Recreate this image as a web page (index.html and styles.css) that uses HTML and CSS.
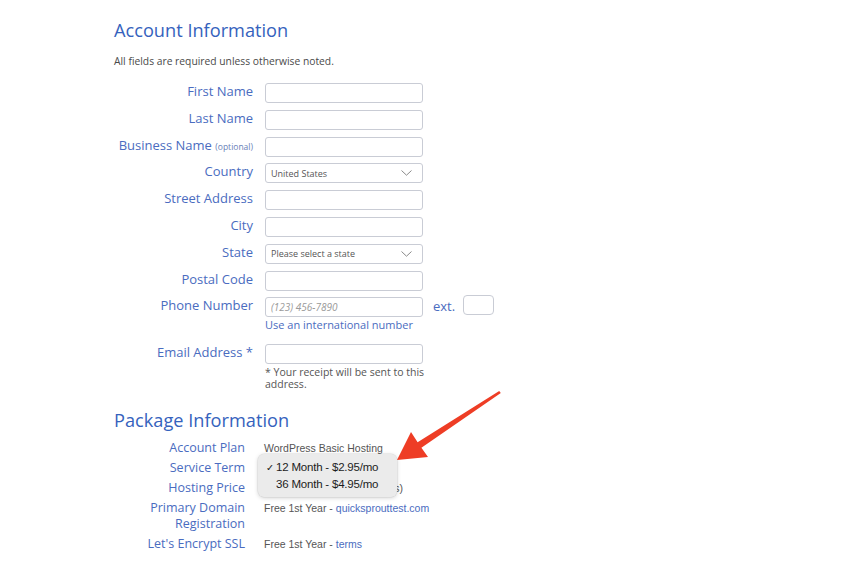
FILE: index.html
```html
<!DOCTYPE html>
<html lang="en">
<head>
<meta charset="utf-8">
<title>Account Information</title>
<link rel="stylesheet" href="styles.css">
</head>
<body>
<div class="page">
  <h2 class="section-title first">Account Information</h2>
  <p class="note">All fields are required unless otherwise noted.</p>

  <div class="form-grid">
    <label class="label">First Name</label>
    <div class="field"><input class="input" type="text"></div>

    <label class="label">Last Name</label>
    <div class="field"><input class="input" type="text"></div>

    <label class="label">Business Name <small class="optional">(optional)</small></label>
    <div class="field"><input class="input" type="text"></div>

    <label class="label">Country</label>
    <div class="field">
      <div class="select"><span>United States</span>
        <svg class="chevron" width="11" height="6" viewBox="0 0 11 6"><path d="M0.5 0.5 L5.5 5.2 L10.5 0.5" fill="none" stroke="#8a8a8a" stroke-width="1"/></svg>
      </div>
    </div>

    <label class="label">Street Address</label>
    <div class="field"><input class="input" type="text"></div>

    <label class="label">City</label>
    <div class="field"><input class="input" type="text"></div>

    <label class="label">State</label>
    <div class="field">
      <div class="select"><span>Please select a state</span>
        <svg class="chevron" width="11" height="6" viewBox="0 0 11 6"><path d="M0.5 0.5 L5.5 5.2 L10.5 0.5" fill="none" stroke="#8a8a8a" stroke-width="1"/></svg>
      </div>
    </div>

    <label class="label">Postal Code</label>
    <div class="field"><input class="input" type="text"></div>

    <label class="label">Phone Number</label>
    <div class="field">
      <div class="phone-line">
        <input class="input" type="text" placeholder="(123) 456-7890">
        <span class="ext">ext.</span>
        <input class="input ext-input" type="text">
      </div>
      <a class="help" href="#">Use an international number</a>
    </div>

    <label class="label">Email Address *</label>
    <div class="field">
      <input class="input" type="text">
      <p class="field-note">* Your receipt will be sent to this address.</p>
    </div>
  </div>

  <h2 class="section-title second">Package Information</h2>
  <div class="package-grid">
    <div class="plabel">Account Plan</div>
    <div class="pvalue">WordPress Basic Hosting</div>

    <div class="plabel">Service Term</div>
    <div class="pvalue term-cell">
      <div class="popup">
        <div class="popup-item"><span class="check">✓</span>12 Month - $2.95/mo</div>
        <div class="popup-item"><span class="check"></span>36 Month - $4.95/mo</div>
      </div>
    </div>

    <div class="plabel">Hosting Price</div>
    <div class="pvalue price">$35.40 (billed over 12 months)</div>

    <div class="plabel">Primary Domain<br>Registration</div>
    <div class="pvalue">Free 1st Year - <a class="link" href="#">quicksprouttest.com</a></div>

    <div class="plabel">Let's Encrypt SSL</div>
    <div class="pvalue">Free 1st Year - <a class="link" href="#">terms</a></div>
  </div>

  <svg class="arrow" width="848" height="561" viewBox="0 0 848 561">
    <polygon points="397,460 411,432 417.6,442.3 499.2,391 500.8,393 421.4,447.7 428,457" fill="#ee3d25"/>
  </svg>
</div>
</body>
</html>
```

FILE: styles.css
```css
html, body {
  margin: 0;
  padding: 0;
  background: #ffffff;
}

.page {
  position: relative;
  width: 848px;
  height: 561px;
  overflow: hidden;
  box-sizing: border-box;
  padding-left: 114px;
  padding-top: 18px;
  font-family: "Open Sans", "Liberation Sans", sans-serif;
}

.section-title {
  margin: 0;
  font-size: 18.2px;
  line-height: 24px;
  font-weight: 400;
  color: #3562bd;
}

.section-title.second {
  margin-top: 18px;
}

.note {
  margin: 12px 0 15px 0;
  font-size: 10.3px;
  line-height: 14px;
  color: #4a4a4a;
}

.form-grid {
  display: grid;
  grid-template-columns: 139px auto;
  column-gap: 12px;
  row-gap: 6.8px;
  align-items: start;
}

.label {
  text-align: right;
  font-size: 13px;
  line-height: 17px;
  color: #4a6cc0;
  white-space: nowrap;
}

.optional {
  font-size: 8.5px;
  color: #6a7fb8;
}

.field {
  display: flex;
  flex-direction: column;
  align-items: flex-start;
}

.input {
  display: block;
  box-sizing: border-box;
  width: 158px;
  height: 20px;
  margin: 0;
  padding: 0 5px;
  border: 1px solid #c9ccd5;
  border-radius: 3px;
  background: #ffffff;
  font-family: "Open Sans", "Liberation Sans", sans-serif;
  font-size: 10px;
  color: #555555;
  outline: none;
}

.input::placeholder {
  color: #9a9a9a;
  font-style: italic;
}

.select {
  box-sizing: border-box;
  width: 158px;
  height: 20px;
  padding: 0 10px 0 5px;
  border: 1px solid #c9ccd5;
  border-radius: 3px;
  display: flex;
  align-items: center;
  justify-content: space-between;
  font-size: 9px;
  color: #555555;
}

.chevron {
  display: block;
}

.phone-line {
  display: flex;
  align-items: flex-start;
}

.ext {
  margin-left: 10px;
  font-size: 13px;
  line-height: 18px;
  color: #4a6cc0;
}

.ext-input {
  width: 31px;
  margin-left: 8px;
  margin-top: -2px;
  border-radius: 4px;
}

.help {
  display: block;
  margin: 1px 0 5px 0;
  font-size: 11px;
  line-height: 14px;
  color: #4a6cc0;
  text-decoration: none;
}

.field-note {
  width: 160px;
  margin: 2px 0 0 0;
  font-size: 10.5px;
  line-height: 12px;
  color: #555555;
}

.package-grid {
  display: grid;
  grid-template-columns: 131px auto;
  column-gap: 19px;
  row-gap: 4px;
  align-items: baseline;
  margin-top: 8px;
}

.plabel {
  text-align: right;
  font-size: 12.5px;
  line-height: 16px;
  color: #4a6cc0;
}

.pvalue {
  font-family: "Liberation Sans", Arial, sans-serif;
  font-size: 10.5px;
  line-height: 16px;
  color: #555555;
}

.price {
  letter-spacing: -0.1px;
}

.term-cell {
  position: relative;
  align-self: stretch;
}

.link {
  color: #4a6cc0;
  text-decoration: none;
}

.popup {
  position: absolute;
  left: -6px;
  top: -6px;
  z-index: 2;
  width: 139px;
  height: 43px;
  box-sizing: border-box;
  padding-top: 5px;
  border-radius: 6px;
  background: #ebebeb;
  box-shadow: 0 1px 4px rgba(0, 0, 0, 0.18), 0 0 0 0.5px rgba(0, 0, 0, 0.08);
  font-size: 11.5px;
  letter-spacing: -0.2px;
  color: #1c1c1c;
}

.popup-item {
  display: flex;
  align-items: baseline;
  height: 17px;
  line-height: 17px;
}

.check {
  display: inline-block;
  width: 18px;
  padding-left: 8px;
  box-sizing: border-box;
  font-family: "DejaVu Sans", sans-serif;
  font-size: 9.5px;
}

.arrow {
  position: absolute;
  left: 0;
  top: 0;
  z-index: 3;
  pointer-events: none;
}
```
